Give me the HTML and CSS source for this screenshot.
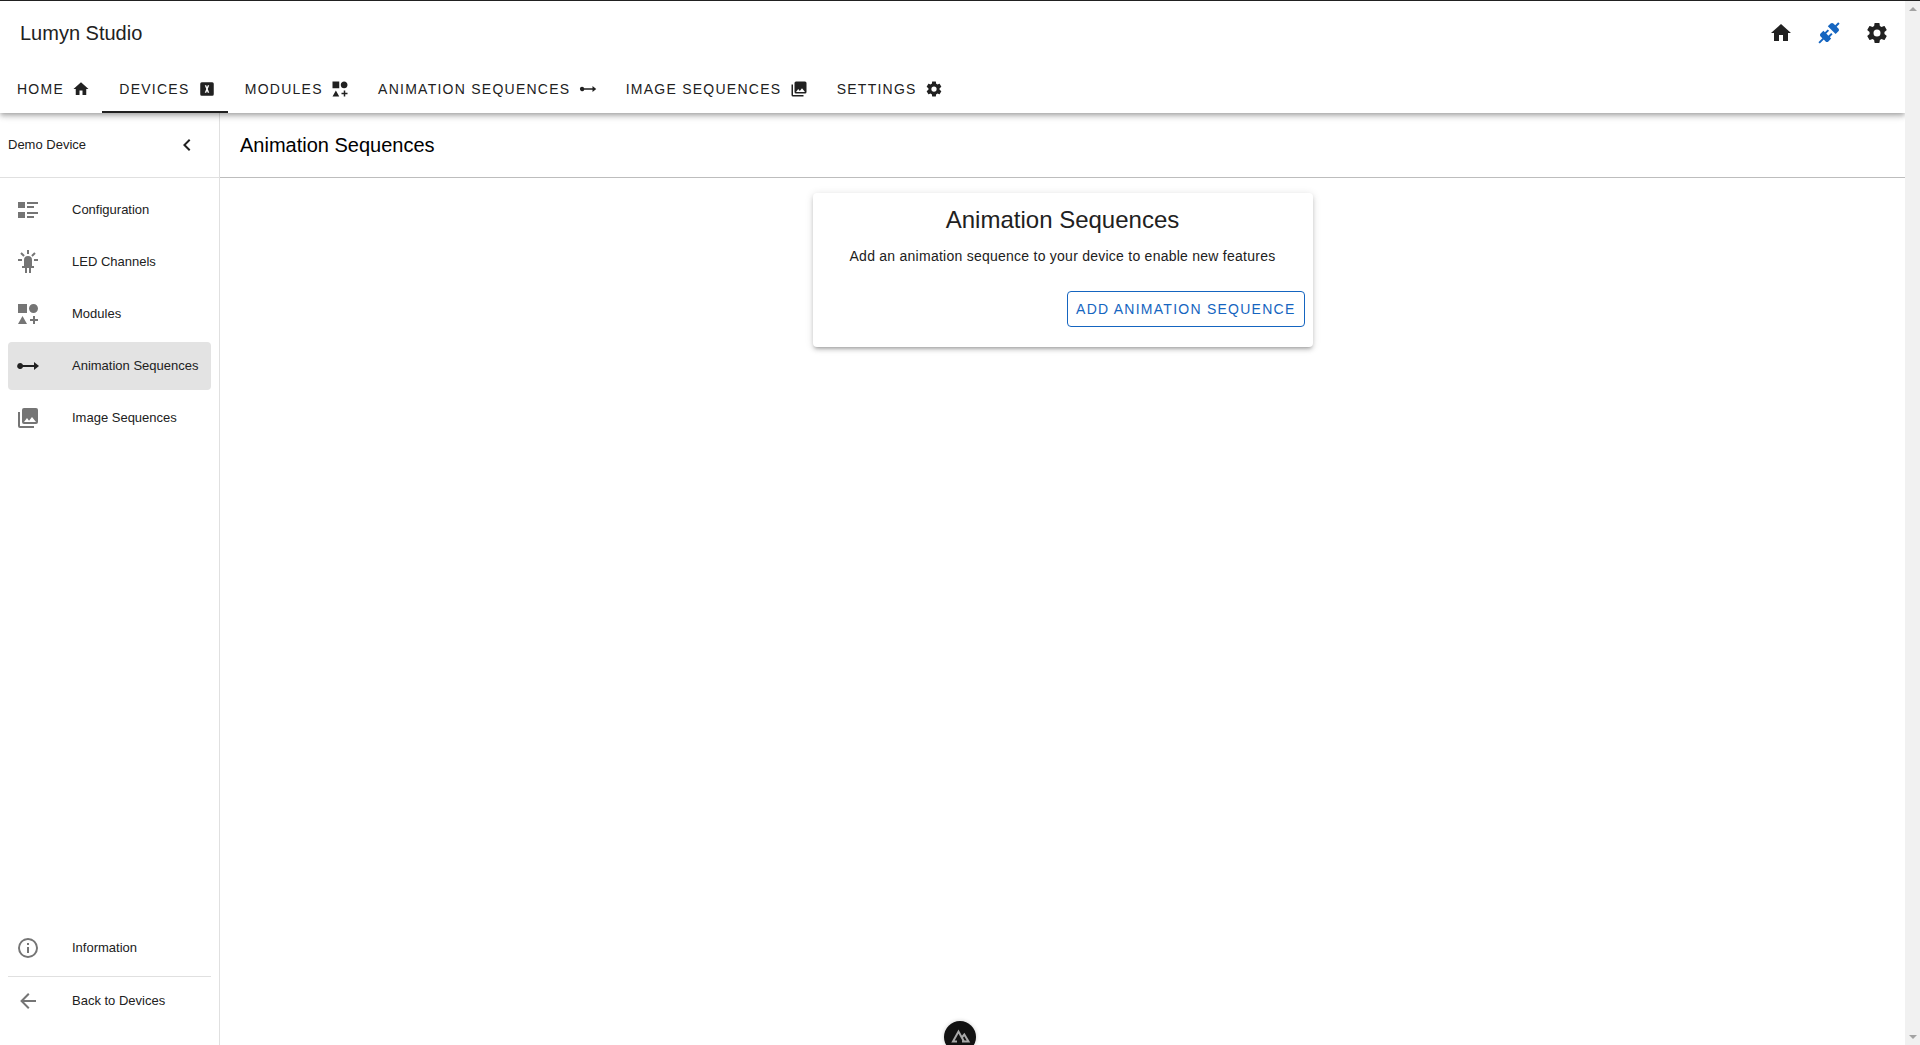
FILE: index.html
```html
<!DOCTYPE html>
<html lang="en">
  <head>
    <meta charset="utf-8" />
    <meta name="viewport" content="width=device-width, initial-scale=1" />
    <title>Lumyn Studio</title>
    <link rel="stylesheet" href="styles.css">
  </head>
  <body>
    <div class="page">
      <header class="topbar">
        <div class="titlebar">
          <div class="app-title">Lumyn Studio</div>
          <div class="top-actions">
            <svg class="top-icon" viewBox="0 0 24 24"><path d="M10,20V14H14V20H19V12H22L12,3L2,12H5V20H10Z"/></svg>
            <svg class="top-icon blue" viewBox="0 0 24 24"><path d="M21.4 7.5C22.2 8.3 22.2 9.6 21.4 10.3L18.6 13.1L10.8 5.3L13.6 2.5C14.4 1.7 15.7 1.7 16.4 2.5L18.2 4.3L21.2 1.3L22.6 2.7L19.6 5.7L21.4 7.5M15.6 13.3L14.2 11.9L11.4 14.7L9.3 12.6L12.1 9.8L10.7 8.4L7.9 11.2L6.4 9.8L3.6 12.6C2.8 13.4 2.8 14.7 3.6 15.4L5.4 17.2L1.4 21.2L2.8 22.6L6.8 18.6L8.6 20.4C9.4 21.2 10.7 21.2 11.4 20.4L14.2 17.6L12.8 16.2L15.6 13.3Z"/></svg>
            <svg class="top-icon" viewBox="0 0 24 24"><path d="M12,15.5A3.5,3.5 0 0,1 8.5,12A3.5,3.5 0 0,1 12,8.5A3.5,3.5 0 0,1 15.5,12A3.5,3.5 0 0,1 12,15.5M19.43,12.97C19.47,12.65 19.5,12.33 19.5,12C19.5,11.67 19.47,11.34 19.43,11L21.54,9.37C21.73,9.22 21.78,8.95 21.66,8.73L19.66,5.27C19.54,5.05 19.27,4.96 19.05,5.05L16.56,6.05C16.04,5.66 15.5,5.32 14.87,5.07L14.5,2.42C14.46,2.18 14.25,2 14,2H10C9.75,2 9.54,2.18 9.5,2.42L9.13,5.07C8.5,5.32 7.96,5.66 7.44,6.05L4.95,5.05C4.73,4.96 4.46,5.05 4.34,5.27L2.34,8.73C2.21,8.95 2.27,9.22 2.46,9.37L4.57,11C4.53,11.34 4.5,11.67 4.5,12C4.5,12.33 4.53,12.65 4.57,12.97L2.46,14.63C2.27,14.78 2.21,15.05 2.34,15.27L4.34,18.73C4.46,18.95 4.73,19.03 4.95,18.95L7.44,17.94C7.96,18.34 8.5,18.68 9.13,18.93L9.5,21.58C9.54,21.82 9.75,22 10,22H14C14.25,22 14.46,21.82 14.5,21.58L14.87,18.93C15.5,18.67 16.04,18.34 16.56,17.94L19.05,18.95C19.27,19.03 19.54,18.95 19.66,18.73L21.66,15.27C21.78,15.05 21.73,14.78 21.54,14.63L19.43,12.97Z"/></svg>
          </div>
        </div>
        <nav class="tabs">
          <a class="tab">Home <svg class="tab-icon" viewBox="0 0 24 24"><path d="M10,20V14H14V20H19V12H22L12,3L2,12H5V20H10Z"/></svg></a>
          <a class="tab active">Devices <svg class="tab-icon" viewBox="0 0 24 24"><path d="M9,7L11,12L9,17H11L12,14.5L13,17H15L13,12L15,7H13L12,9.5L11,7H9M5,3H19A2,2 0 0,1 21,5V19A2,2 0 0,1 19,21H5A2,2 0 0,1 3,19V5A2,2 0 0,1 5,3Z"/></svg></a>
          <a class="tab">Modules <svg class="tab-icon" viewBox="0 0 24 24"><path d="M2,2H11V11H2V2M17.5,2C20,2 22,4 22,6.5C22,9 20,11 17.5,11C15,11 13,9 13,6.5C13,4 15,2 17.5,2M6.5,14L11,22H2L6.5,14M19,17H22V19H19V22H17V19H14V17H17V14H19V17Z"/></svg></a>
          <a class="tab">Animation Sequences <svg class="tab-icon" viewBox="0 0 24 24"><path d="M4,9A3,3 0 0,1 7,11H18V8L23,12L18,16V13H7A3,3 0 1,1 4,9Z"/></svg></a>
          <a class="tab">Image Sequences <svg class="tab-icon" viewBox="0 0 24 24"><path d="M22,16V4A2,2 0 0,0 20,2H8A2,2 0 0,0 6,4V16A2,2 0 0,0 8,18H20A2,2 0 0,0 22,16M11,12L13.03,14.71L16,11L20,16H8M2,6V20A2,2 0 0,0 4,22H18V20H4V6"/></svg></a>
          <a class="tab">Settings <svg class="tab-icon" viewBox="0 0 24 24"><path d="M12,15.5A3.5,3.5 0 0,1 8.5,12A3.5,3.5 0 0,1 12,8.5A3.5,3.5 0 0,1 15.5,12A3.5,3.5 0 0,1 12,15.5M19.43,12.97C19.47,12.65 19.5,12.33 19.5,12C19.5,11.67 19.47,11.34 19.43,11L21.54,9.37C21.73,9.22 21.78,8.95 21.66,8.73L19.66,5.27C19.54,5.05 19.27,4.96 19.05,5.05L16.56,6.05C16.04,5.66 15.5,5.32 14.87,5.07L14.5,2.42C14.46,2.18 14.25,2 14,2H10C9.75,2 9.54,2.18 9.5,2.42L9.13,5.07C8.5,5.32 7.96,5.66 7.44,6.05L4.95,5.05C4.73,4.96 4.46,5.05 4.34,5.27L2.34,8.73C2.21,8.95 2.27,9.22 2.46,9.37L4.57,11C4.53,11.34 4.5,11.67 4.5,12C4.5,12.33 4.53,12.65 4.57,12.97L2.46,14.63C2.27,14.78 2.21,15.05 2.34,15.27L4.34,18.73C4.46,18.95 4.73,19.03 4.95,18.95L7.44,17.94C7.96,18.34 8.5,18.68 9.13,18.93L9.5,21.58C9.54,21.82 9.75,22 10,22H14C14.25,22 14.46,21.82 14.5,21.58L14.87,18.93C15.5,18.67 16.04,18.34 16.56,17.94L19.05,18.95C19.27,19.03 19.54,18.95 19.66,18.73L21.66,15.27C21.78,15.05 21.73,14.78 21.54,14.63L19.43,12.97Z"/></svg></a>
        </nav>
      </header>

      <div class="body-row">
        <aside class="sidebar">
          <div class="side-head">
            <span class="side-label">Demo Device</span>
            <svg class="chevron" viewBox="0 0 24 24"><path d="M15.41,16.58L10.83,12L15.41,7.41L14,6L8,12L14,18L15.41,16.58Z"/></svg>
          </div>
          <div class="side-list">
            <a class="side-item">
              <svg class="side-icon" viewBox="0 0 24 24"><path d="M2,4H9V10H2V4M2,14H9V20H2V14M11,4H22V6H11V4M11,8H18V10H11V8M11,14H22V16H11V14M11,18H18V20H11V18Z"/></svg>
              <span class="side-label">Configuration</span>
            </a>
            <a class="side-item">
              <svg class="side-icon" viewBox="0 0 24 24"><path d="M11,0V4H13V0H11M18.3,2.29L15.24,5.29L16.64,6.71L19.7,3.71L18.3,2.29M5.7,2.29L4.3,3.71L7.36,6.71L8.76,5.29L5.7,2.29M12,6A4,4 0 0,0 8,10V16H6V18H9V23H11V18H13V23H15V18H18V16H16V10A4,4 0 0,0 12,6M2,9V11H6V9H2M18,9V11H22V9H18Z"/></svg>
              <span class="side-label">LED Channels</span>
            </a>
            <a class="side-item">
              <svg class="side-icon" viewBox="0 0 24 24"><path d="M2,2H11V11H2V2M17.5,2C20,2 22,4 22,6.5C22,9 20,11 17.5,11C15,11 13,9 13,6.5C13,4 15,2 17.5,2M6.5,14L11,22H2L6.5,14M19,17H22V19H19V22H17V19H14V17H17V14H19V17Z"/></svg>
              <span class="side-label">Modules</span>
            </a>
            <a class="side-item active">
              <svg class="side-icon" viewBox="0 0 24 24"><path d="M4,9A3,3 0 0,1 7,11H18V8L23,12L18,16V13H7A3,3 0 1,1 4,9Z"/></svg>
              <span class="side-label">Animation Sequences</span>
            </a>
            <a class="side-item">
              <svg class="side-icon" viewBox="0 0 24 24"><path d="M22,16V4A2,2 0 0,0 20,2H8A2,2 0 0,0 6,4V16A2,2 0 0,0 8,18H20A2,2 0 0,0 22,16M11,12L13.03,14.71L16,11L20,16H8M2,6V20A2,2 0 0,0 4,22H18V20H4V6"/></svg>
              <span class="side-label">Image Sequences</span>
            </a>
          </div>
          <div class="side-foot">
            <a class="side-item">
              <svg class="side-icon" viewBox="0 0 24 24"><path d="M11,9H13V7H11M12,20C7.59,20 4,16.41 4,12C4,7.59 7.59,4 12,4C16.41,4 20,7.59 20,12C20,16.41 16.41,20 12,20M12,2A10,10 0 0,0 2,12A10,10 0 0,0 12,22A10,10 0 0,0 22,12A10,10 0 0,0 12,2M11,17H13V11H11V17Z"/></svg>
              <span class="side-label">Information</span>
            </a>
            <div class="side-divider"></div>
            <a class="side-item">
              <svg class="side-icon" viewBox="0 0 24 24"><path d="M20,11V13H8L13.5,18.5L12.08,19.92L4.16,12L12.08,4.08L13.5,5.5L8,11H20Z"/></svg>
              <span class="side-label">Back to Devices</span>
            </a>
          </div>
        </aside>

        <main class="content">
          <div class="content-head">Animation Sequences</div>
          <div class="content-body">
            <section class="card">
              <h2 class="card-title">Animation Sequences</h2>
              <p class="card-text">Add an animation sequence to your device to enable new features</p>
              <div class="card-actions">
                <button class="outline-btn">Add Animation Sequence</button>
              </div>
            </section>
          </div>
        </main>
      </div>
    </div>

    <div class="scrollbar">
      <span class="arrow up"></span>
      <span class="arrow down"></span>
    </div>

    <!-- devtools button sits over the page -->
    <div class="devtools">
      <svg viewBox="0 0 32 32"><path d="M13,20.5H9L14.5,10.5L20,20.5M18,20.5H24.5L20.3,13.5L17.8,16.5"/></svg>
    </div>
  </body>
</html>
```

FILE: styles.css
```css
*{
  box-sizing: border-box;
}

html, body{
  margin: 0;
  height: 100%;
  overflow: hidden;
}

body{
  display: flex;
  font-family: "Liberation Sans", Arial, sans-serif;
  color: #212121;
  background-color: #fff;
  border-top: 1px solid #212121;
}

a{
  color: inherit;
  text-decoration: none;
}

.page{
  flex: 1;
  min-width: 0;
  display: flex;
  flex-direction: column;
}

/* top bar */
.topbar{
  position: relative;
  z-index: 2;
  height: 112px;
  background-color: #fff;
  box-shadow: 0 2px 4px -1px rgba(0,0,0,.2), 0 4px 5px 0 rgba(0,0,0,.14), 0 1px 10px 0 rgba(0,0,0,.12);
}

.titlebar{
  height: 64px;
  display: flex;
  align-items: center;
  justify-content: space-between;
  padding: 0 16px 0 20px;
}

.app-title{
  font-size: 20px;
  letter-spacing: 0;
}

.top-actions{
  display: flex;
  gap: 24px;
}

.top-icon{
  width: 24px;
  height: 24px;
  fill: #212121;
}

.top-icon.blue{
  fill: #1565c0;
}

.tabs{
  height: 48px;
  display: flex;
}

.tab{
  display: flex;
  align-items: center;
  gap: 8.3px;
  padding: 2px 12px 0 17px;
  font-size: 14px;
  letter-spacing: 1.25px;
  text-transform: uppercase;
  border-bottom: 2px solid transparent;
}

.tab.active{
  border-bottom-color: #212121;
}

.tab-icon{
  width: 18px;
  height: 18px;
  fill: #212121;
}

/* under the top bar */
.body-row{
  flex: 1;
  min-height: 0;
  display: flex;
}

.sidebar{
  width: 220px;
  flex-shrink: 0;
  display: flex;
  flex-direction: column;
  border-right: 1px solid #e0e0e0;
}

.side-head{
  height: 65px;
  flex-shrink: 0;
  display: flex;
  align-items: center;
  justify-content: space-between;
  padding: 0 20px 0 8px;
  font-size: 13px;
  border-bottom: 1px solid #e0e0e0;
}

.side-label{
  margin-bottom: 1px;
}

.chevron{
  width: 24px;
  height: 24px;
  fill: #212121;
}

.side-list{
  flex: 1;
  display: flex;
  flex-direction: column;
  gap: 4px;
  padding: 8px 8px 0;
}

.side-item{
  height: 48px;
  flex-shrink: 0;
  display: flex;
  align-items: center;
  gap: 32px;
  padding: 0 8px;
  font-size: 13px;
  border-radius: 4px;
}

.side-item.active{
  background-color: #e3e3e3;
}

.side-icon{
  width: 24px;
  height: 24px;
  fill: #757575;
}

.side-item.active .side-icon{
  fill: #212121;
}

.side-foot{
  padding: 0 8px 20px;
}

.side-divider{
  height: 1px;
  margin: 4px 0 0;
  background-color: #e0e0e0;
}

/* main area */
.content{
  flex: 1;
  min-width: 0;
  display: flex;
  flex-direction: column;
}

.content-head{
  height: 65px;
  flex-shrink: 0;
  display: flex;
  align-items: center;
  padding-left: 20px;
  font-size: 20px;
  color: #000;
  border-bottom: 1px solid #bdbdbd;
}

.content-body{
  flex: 1;
  display: flex;
  justify-content: center;
  align-items: flex-start;
  padding-top: 15px;
}

.card{
  width: 500px;
  height: 154px;
  padding-top: 11px;
  border-radius: 4px;
  text-align: center;
  background-color: #fff;
  box-shadow: 0 3px 3px -2px rgba(0,0,0,.2), 0 3px 4px 0 rgba(0,0,0,.14), 0 1px 8px 0 rgba(0,0,0,.12);
}

.card-title{
  margin: 0;
  font-size: 24px;
  font-weight: 400;
  line-height: 32px;
}

.card-text{
  margin: 10px 0 0;
  font-size: 14px;
  line-height: 20px;
  letter-spacing: .25px;
}

.card-actions{
  display: flex;
  justify-content: flex-end;
  padding: 25px 8px 0;
}

.outline-btn{
  height: 36px;
  padding: 0 8px;
  font-family: inherit;
  font-size: 14px;
  letter-spacing: 1.25px;
  text-transform: uppercase;
  color: #1565c0;
  background: none;
  border: 1px solid #1565c0;
  border-radius: 4px;
}

/* fake browser scrollbar */
.scrollbar{
  position: relative;
  z-index: 3;
  width: 15px;
  flex-shrink: 0;
  display: flex;
  flex-direction: column;
  justify-content: space-between;
  padding: 6px 0;
  background-color: #f1f1f1;
}

.arrow{
  width: 0;
  height: 0;
  margin: 0 auto;
  border-left: 4px solid transparent;
  border-right: 4px solid transparent;
}

.arrow.up{
  border-bottom: 4px solid #a3a3a3;
}

.arrow.down{
  border-top: 4px solid #a3a3a3;
}

.devtools{
  position: absolute;
  left: 944px;
  top: 1021px;
  width: 32px;
  height: 32px;
  border-radius: 50%;
  background-color: #111;
  box-shadow: 0 0 4px rgba(0,0,0,.2);
}

.devtools svg{
  display: block;
  width: 32px;
  height: 32px;
  fill: none;
  stroke: #a8a8a8;
  stroke-width: 2;
}
```
